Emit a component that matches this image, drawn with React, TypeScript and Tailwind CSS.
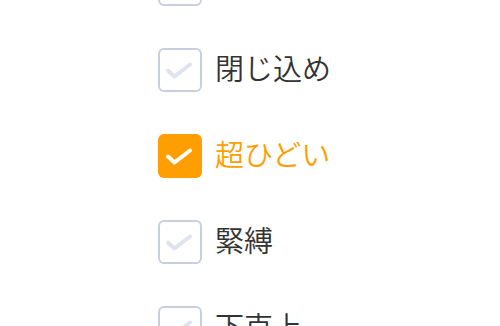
import React from "react";

const items = [
  { label: "拘束", checked: false },
  { label: "閉じ込め", checked: false },
  { label: "超ひどい", checked: true },
  { label: "緊縛", checked: false },
  { label: "下克上", checked: false },
];

function Box({ checked }: { checked: boolean }) {
  return (
    <div
      className={`flex h-[44px] w-[44px] shrink-0 rounded-[6px] ${
        checked ? "bg-[#ff9e00]" : "bg-white ring-2 ring-inset ring-[#c9cee0]"
      }`}
    >
      <svg width="44" height="44" viewBox="0 0 44 44" fill="none">
        <polyline
          points="10,22.5 16.5,28.5 32,16.5"
          stroke={checked ? "#ffffff" : "#dfe3f0"}
          strokeWidth="4"
          strokeLinecap="round"
          strokeLinejoin="round"
        />
      </svg>
    </div>
  );
}

export default function App() {
  return (
    <div
      className="h-[326px] w-[500px] overflow-hidden bg-white"
      style={{ fontFamily: '"Noto Sans CJK JP", "Noto Sans", sans-serif' }}
    >
      <div className="mt-[-38px] flex flex-col gap-[42px] pl-[158px]">
        {items.map((it) => (
          <div key={it.label} className="flex h-[44px] items-center gap-[13px]">
            <Box checked={it.checked} />
            <span
              className={`pb-[6px] text-[29px] font-[350] leading-none ${
                it.checked ? "text-[#ff9e00]" : "text-[#333333]"
              }`}
            >
              {it.label}
            </span>
          </div>
        ))}
      </div>
    </div>
  );
}
